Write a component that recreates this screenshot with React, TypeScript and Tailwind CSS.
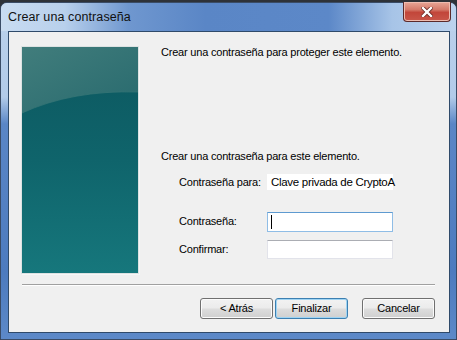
const ui = "font-['Liberation_Sans',Arial,sans-serif] text-[11px] tracking-[-0.2px] text-black";

function Panel() {
  return (
    <div className="h-[228px] w-[118px] shrink-0 border border-[#dde2e2] shadow-[1px_1px_0_#f7f7f7]">
      <svg width="116" height="226" viewBox="0 0 116 226" className="block">
        <defs>
          <linearGradient id="low" x1="0" y1="0" x2="0" y2="1">
            <stop offset="0" stopColor="#0c575f" />
            <stop offset="0.5" stopColor="#0f646b" />
            <stop offset="1" stopColor="#16777c" />
          </linearGradient>
          <linearGradient id="hi" x1="0" y1="0" x2="1" y2="1">
            <stop offset="0" stopColor="#417d7c" />
            <stop offset="1" stopColor="#286a6e" />
          </linearGradient>
        </defs>
        <rect width="116" height="226" fill="url(#low)" />
        <path d="M0 0 H116 V45 Q50 43 0 66 Z" fill="url(#hi)" />
        <path d="M0 66 Q50 43 116 45" fill="none" stroke="#3a7778" strokeWidth="1" opacity="0.7" />
      </svg>
    </div>
  );
}

function Button({ label, primary }: { label: string; primary?: boolean }) {
  return (
    <div
      className={
        "flex h-[21px] w-[73px] items-center justify-center rounded-[3px] border bg-[linear-gradient(180deg,#f2f2f2_0%,#ebebeb_48%,#dddddd_52%,#cfcfcf_100%)] " +
        (primary
          ? "border-[#3c7fb1] shadow-[inset_0_0_0_1px_#9fd4f3]"
          : "border-[#707070] shadow-[inset_0_0_0_1px_#fbfbfb]")
      }
    >
      <span className={ui}>{label}</span>
    </div>
  );
}

export default function App() {
  return (
    <div className="h-[340px] w-[457px] overflow-hidden bg-[#2e3238]">
      <div className="mt-[2px] flex h-[338px] w-[457px] flex-col rounded-t-[7px] border border-[#3a4c66] bg-[linear-gradient(180deg,#bcd2ec_0%,#b2cbe9_28%,#5a86c6_36%,#4d7bbf_80%,#5c89c8_100%)]">
        <div className="flex h-[28px] items-start justify-between rounded-t-[6px] bg-[linear-gradient(90deg,#c9dcf1_0%,#b8d0ec_14%,#6f97cf_28%,#5a86c6_45%,#5c88c8_72%,#a7c4e7_86%,#bcd3ee_100%)]">
          <span className="mt-[5px] pl-[7px] font-['Liberation_Sans',Arial,sans-serif] text-[12.5px] tracking-[0.1px] text-[#111]">
            Crear una contraseña
          </span>
          <div className="mr-[5px] -mt-[1px] flex h-[20px] w-[48px] items-center justify-center rounded-b-[4px] border border-t-0 border-[#5b2a2a] bg-[linear-gradient(180deg,#e8a797_0%,#d47a6a_40%,#c2463a_55%,#c9574a_100%)] shadow-[inset_0_0_0_1px_#eebcb0]">
            <svg width="12" height="10" viewBox="0 0 12 10">
              <path d="M2 1 L10 9 M10 1 L2 9" stroke="#6b2b25" strokeWidth="4" strokeLinecap="square" />
              <path d="M2 1 L10 9 M10 1 L2 9" stroke="#ffffff" strokeWidth="2.4" strokeLinecap="square" />
            </svg>
          </div>
        </div>

        <div className="flex flex-1 pb-[6px] pl-[7px] pr-[6px]">
          <div className="flex h-[302px] w-[442px] flex-col border border-[#2f4a6a] bg-[#f0f0f0]">
            <div className="flex pl-[12px] pt-[14px]">
              <Panel />
              <div className="ml-[22px] flex flex-col">
                <p className={ui + " leading-[13px]"}>Crear una contraseña para proteger este elemento.</p>
                <p className={ui + " mt-[91px] leading-[13px]"}>Crear una contraseña para este elemento.</p>
                <div className="mt-[11px] flex items-center">
                  <span className={ui + " ml-[18px] w-[88px]"}>Contraseña para:</span>
                  <div className="flex h-[16px] w-[126px] items-center bg-white pl-[4px]">
                    <span className="whitespace-nowrap font-['Liberation_Sans',Arial,sans-serif] text-[11.5px] tracking-[-0.3px] text-black">
                      Clave privada de CryptoA
                    </span>
                  </div>
                </div>
                <div className="mt-[21px] flex items-center">
                  <span className={ui + " ml-[18px] w-[88px]"}>Contraseña:</span>
                  <div className="flex h-[20px] w-[126px] items-center border border-[#8fbde6] border-t-[#5e9ad0] bg-white pl-[3px]">
                    <div className="h-[14px] w-px bg-black" />
                  </div>
                </div>
                <div className="mt-[8px] flex items-center">
                  <span className={ui + " ml-[18px] w-[88px]"}>Confirmar:</span>
                  <div className="h-[19px] w-[126px] border border-[#e2e3ea] border-t-[#abadb3] bg-white" />
                </div>
              </div>
            </div>

            <div className="ml-[13px] mr-[14px] mt-[10px] h-[2px] border-t border-b border-t-[#a0a0a0] border-b-white" />

            <div className="mr-[14px] mt-[12px] flex justify-end">
              <Button label="< Atrás" />
              <div className="w-[2px]" />
              <Button label="Finalizar" primary />
              <div className="w-[14px]" />
              <Button label="Cancelar" />
            </div>
          </div>
        </div>
      </div>
    </div>
  );
}
